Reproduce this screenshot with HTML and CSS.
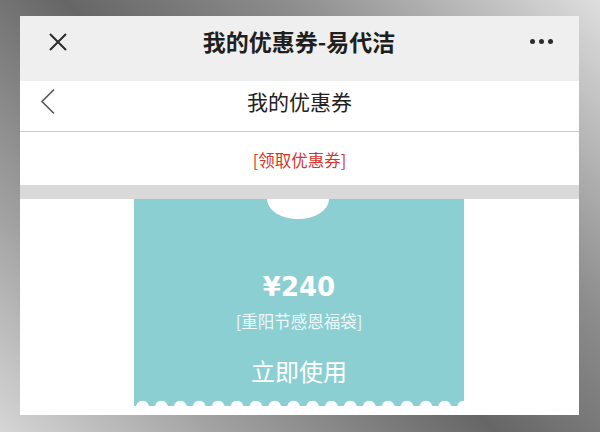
FILE: index.html
```html
<!DOCTYPE html>
<html lang="zh-CN">

<head>
    <meta charset="UTF-8">
    <meta name="viewport" content="width=device-width, initial-scale=1.0">
    <title>我的优惠券-易代洁</title>
    <link rel="stylesheet" href="styles.css">
</head>

<body>

    <div class="screen">
        <!-- WeChat top bar -->
        <div class="wx-bar">
            <svg class="wx-close" width="20" height="20" viewBox="0 0 20 20">
                <path d="M2 2 L18 18 M18 2 L2 18" stroke="#2b2b2b" stroke-width="2" fill="none" />
            </svg>
            <div class="wx-title">我的优惠券-易代洁</div>
            <div class="wx-more">
                <span></span><span></span><span></span>
            </div>
        </div>

        <!-- page header -->
        <div class="nav-bar">
            <svg class="nav-back" width="16" height="27" viewBox="0 0 16 27">
                <path d="M14 1.5 L2 13.5 L14 25.5" stroke="#555" stroke-width="1.6" fill="none" />
            </svg>
            <div class="nav-title">我的优惠券</div>
        </div>

        <div class="get-link">[领取优惠券]</div>
        <div class="divider-band"></div>

        <!-- coupon list -->
        <div class="coupon-list">
            <div class="coupon">
                <div class="coupon-amount">¥240</div>
                <div class="coupon-name">[重阳节感恩福袋]</div>
                <div class="coupon-use">立即使用</div>
            </div>
        </div>
    </div>

</body>

</html>
```

FILE: styles.css
```css
body {
    margin: 0;
    padding: 16px 21px 17px 20px;
    font-family: "Noto Sans CJK SC", "Noto Sans", sans-serif;
    background: linear-gradient(45deg, #d6d6d6 0%, #a0a0a0 22%, #666 48%, #8e8e8e 70%, #dedede 100%);
    height: 432px;
    box-sizing: border-box;
    overflow: hidden;
}

.screen {
    height: 399px;
    background: #fff;
    display: flex;
    flex-direction: column;
    overflow: hidden;
}

.wx-bar {
    height: 65px;
    background: #efefef;
    display: flex;
    align-items: center;
    padding: 0 26px 10px 28px;
    box-sizing: border-box;
    flex-shrink: 0;
}

.wx-close {
    display: block;
    margin-top: -4px;
}

.wx-title {
    flex: 1;
    text-align: center;
    font-size: 23px;
    font-weight: bold;
    color: #1f1f1f;
    margin-top: -6px;
}

.wx-more {
    display: flex;
    gap: 4px;
    margin-top: -4px;
}

.wx-more span {
    width: 5px;
    height: 5px;
    border-radius: 50%;
    background: #2b2b2b;
}

.nav-bar {
    height: 51px;
    border-bottom: 1px solid #c9c9c9;
    display: flex;
    align-items: center;
    padding: 0 0 8px 20px;
    box-sizing: border-box;
    flex-shrink: 0;
}

.nav-back {
    display: block;
    margin-top: -2px;
}

.nav-title {
    flex: 1;
    text-align: center;
    font-size: 21px;
    color: #222;
    margin-left: -36px;
    margin-top: -2px;
}

.get-link {
    height: 53px;
    line-height: 56px;
    text-align: center;
    font-size: 16.5px;
    color: #d6352f;
    flex-shrink: 0;
}

.divider-band {
    height: 14px;
    background: #d9d9d9;
    flex-shrink: 0;
}

.coupon-list {
    flex: 1;
    display: flex;
    justify-content: center;
}

.coupon {
    position: relative;
    width: 330px;
    height: 207px;
    margin-left: -1px;
    background: #8ccfd2;
    color: #fff;
    display: flex;
    flex-direction: column;
    align-items: center;
    padding-top: 73px;
    box-sizing: border-box;
    overflow: hidden;
}

/* half-round notch at the top */
.coupon::before {
    content: "";
    position: absolute;
    top: -20px;
    left: 133px;
    width: 62px;
    height: 40px;
    border-radius: 50%;
    background: #fff;
}

/* scalloped bottom edge */
.coupon::after {
    content: "";
    position: absolute;
    left: -1px;
    right: 0;
    bottom: 0;
    height: 6px;
    background: radial-gradient(circle at 9.5px 7px, #fff 6px, transparent 6.6px) repeat-x;
    background-size: 18.9px 6px;
}

.coupon-amount {
    font-family: "DejaVu Sans", sans-serif;
    font-weight: bold;
    font-size: 26px;
    line-height: 30px;
}

.coupon-name {
    margin-top: 9px;
    font-size: 16.5px;
    line-height: 20px;
    color: #eef8f8;
}

.coupon-use {
    margin-top: 25px;
    font-size: 24px;
    line-height: 30px;
}
```
